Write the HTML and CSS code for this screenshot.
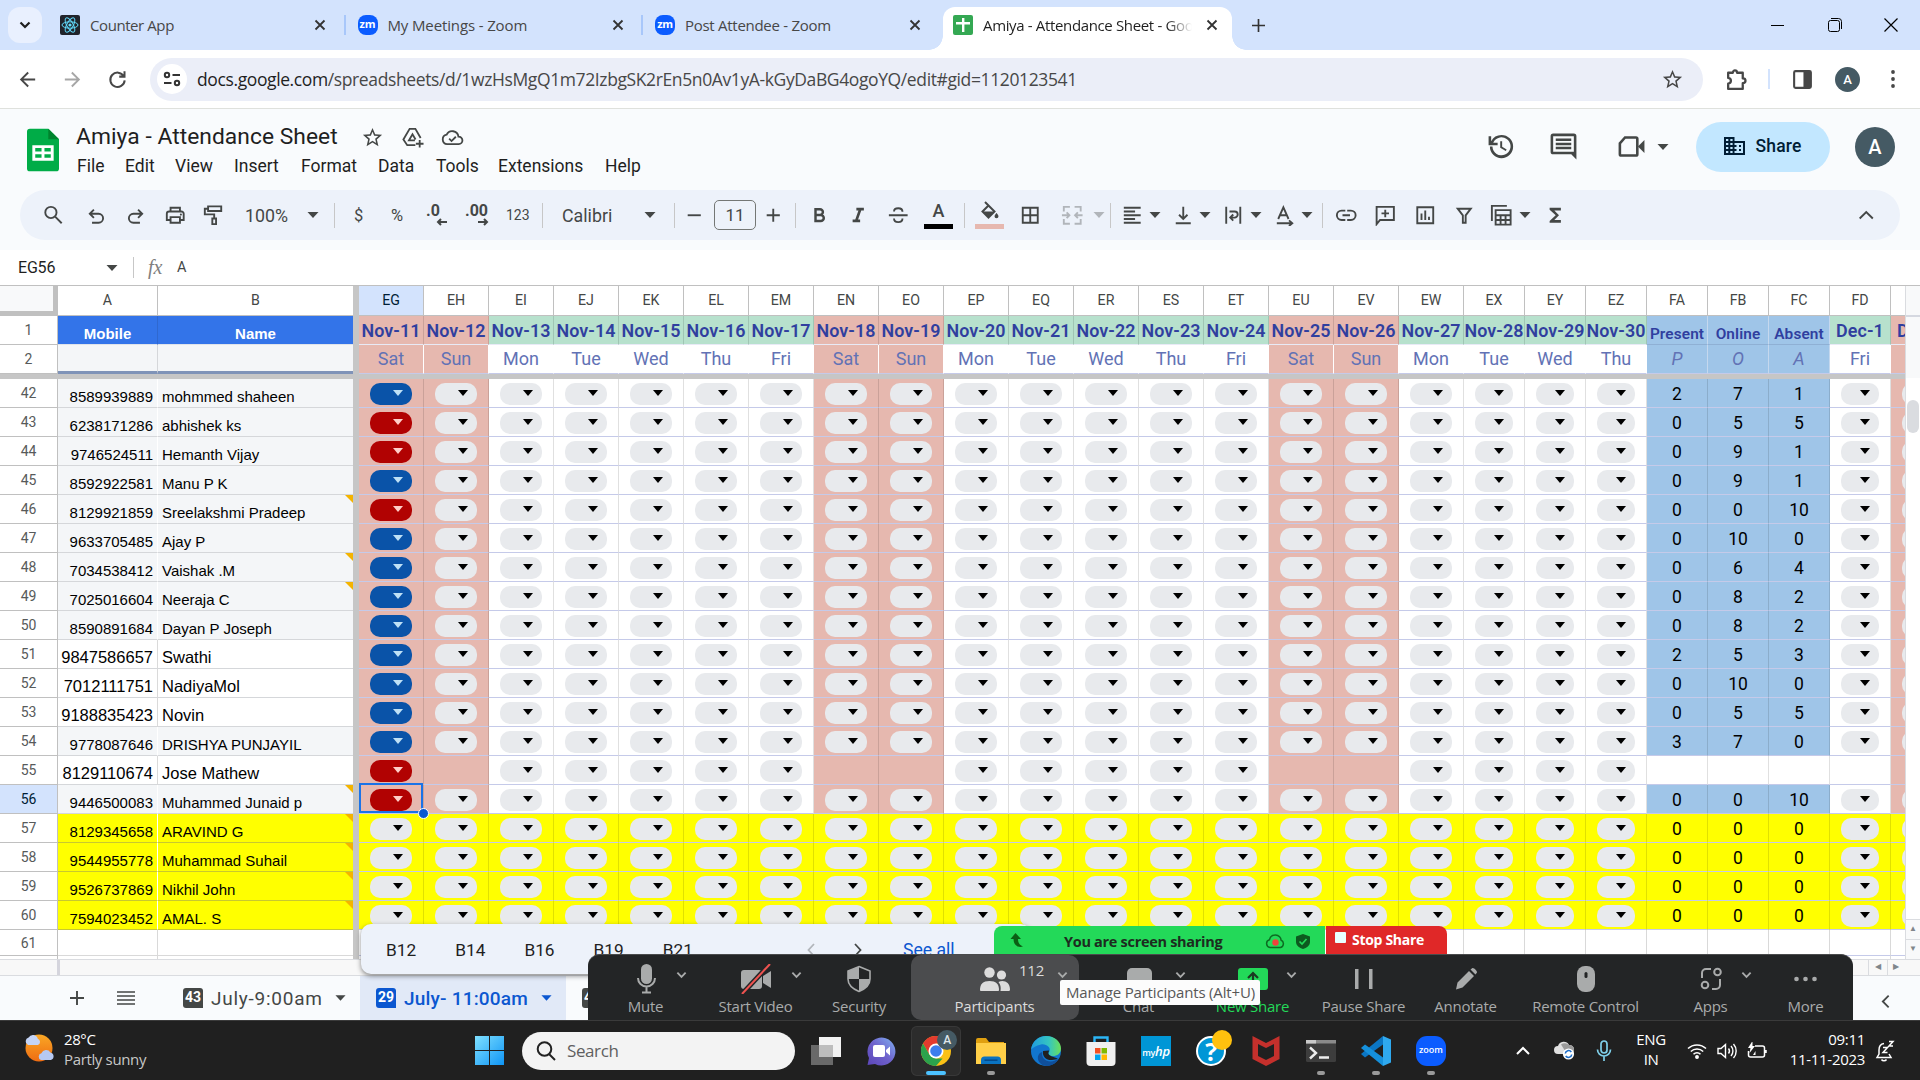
FILE: index.html
```html
<!DOCTYPE html>
<html lang="en">
<head>
<meta charset="utf-8">
<title>Amiya - Attendance Sheet - Google Sheets</title>
<link rel="stylesheet" href="styles.css">
</head>
<body>
<svg width="0" height="0" class="defs">
  <defs>
    <symbol id="x" viewBox="0 0 12 12"><path d="M1.5 1.5l9 9M10.5 1.5l-9 9" stroke="currentColor" stroke-width="1.8" fill="none"/></symbol>
    <symbol id="tri" viewBox="0 0 12 6"><path d="M.5 0h11L6 6z" fill="currentColor"/></symbol>
    <symbol id="star" viewBox="0 0 24 24"><path fill="currentColor" d="M22 9.24l-7.19-.62L12 2 9.19 8.63 2 9.24l5.46 4.73L5.82 21 12 17.27 18.18 21l-1.63-7.03L22 9.24zM12 15.4l-3.76 2.27 1-4.28-3.32-2.88 4.38-.38L12 6.1l1.71 4.04 4.38.38-3.32 2.88 1 4.28L12 15.4z"/></symbol>
    <symbol id="chev" viewBox="0 0 12 8"><path d="M1.5 1.5L6 6l4.500-4.500" stroke="#a9abab" stroke-width="2" fill="none"/></symbol>
  </defs>
</svg>
<div class="screen">

  <header class="tabs">
    <button class="tabsearch"><svg width="12" height="8" viewBox="0 0 12 8"><path d="M1.500 1.500L6 6l4.500-4.500" stroke="#1f1f1f" stroke-width="2.200" fill="none"/></svg></button>
    <div class="tab t1">
      <svg class="fav" viewBox="0 0 20 20"><rect width="20" height="20" rx="2" fill="#20232a"/><g fill="none" stroke="#61dafb" stroke-width="1"><ellipse cx="10" cy="10" rx="8" ry="3.200"/><ellipse cx="10" cy="10" rx="8" ry="3.200" transform="rotate(60 10 10)"/><ellipse cx="10" cy="10" rx="8" ry="3.200" transform="rotate(120 10 10)"/></g><circle cx="10" cy="10" r="1.600" fill="#61dafb"/></svg>
      <span class="ttl">Counter App</span><svg class="close"><use href="#x"/></svg>
    </div>
    <i class="tsep"></i>
    <div class="tab t2"><span class="fav zm">zm</span><span class="ttl">My Meetings - Zoom</span><svg class="close"><use href="#x"/></svg></div>
    <i class="tsep"></i>
    <div class="tab t3"><span class="fav zm">zm</span><span class="ttl">Post Attendee - Zoom</span><svg class="close"><use href="#x"/></svg></div>
    <div class="tab active">
      <svg class="fav" viewBox="0 0 20 20"><rect width="20" height="20" rx="2" fill="#34a853"/><path d="M9 3h2.400v4H17v2.400h-5.600V17H9V9.400H3V7h6z" fill="#fff"/></svg>
      <span class="ttl fade">Amiya - Attendance Sheet - Goo</span><svg class="close"><use href="#x"/></svg>
    </div>
    <svg class="newtab" viewBox="0 0 14 14"><path d="M7 0v14M0 7h14" stroke="#333" stroke-width="1.800"/></svg>
    <div class="wincontrols">
      <svg width="14" height="14"><path d="M0 7.500h13" stroke="#000"/></svg>
      <svg width="14" height="14" fill="none" stroke="#000"><rect x=".5" y="2.500" width="11" height="11" rx="2"/><path d="M3 .5h7.500a3 3 0 0 1 3 3V11"/></svg>
      <svg width="14" height="14"><path d="M.5.5l13 13M13.500.5l-13 13" stroke="#000" stroke-width="1.200"/></svg>
    </div>
  </header>

  <nav class="omni">
    <svg class="nv" viewBox="0 0 24 24"><path fill="#474747" d="M20 11H7.800l5.600-5.600L12 4l-8 8 8 8 1.400-1.400L7.800 13H20z"/></svg>
    <svg class="nv" viewBox="0 0 24 24"><path fill="#a6a6a6" d="M4 11h12.200l-5.600-5.600L12 4l8 8-8 8-1.400-1.400 5.600-5.600H4z"/></svg>
    <svg class="nv" viewBox="0 0 24 24"><path d="M18.500 8.500A7.500 7.500 0 1 0 19.500 13M19.300 3.500V9h-5.500" stroke="#474747" stroke-width="2.100" fill="none"/></svg>
    <div class="urlbar">
      <span class="site"><svg width="18" height="16" viewBox="0 0 18 16" fill="none" stroke="#333" stroke-width="2"><circle cx="4" cy="4" r="2.200"/><path d="M9.500 4H17M1 12h7.500"/><circle cx="14" cy="12" r="2.200"/></svg></span>
      <span class="url"><b>docs.google.com</b>/spreadsheets/d/1wzHsMgQ1m72IzbgSK2rEn5n0Av1yA-kGyDaBG4ogoYQ/edit#gid=1120123541</span>
      <svg class="ustar"><use href="#star"/></svg>
    </div>
    <svg class="ext" viewBox="0 0 24 24"><path d="M4 5.500h4.500c0-3 4-3 4 0H18v5.500c3.500 0 3.500 4.500 0 4.500V21H4v-5c3.500-.5 3.500-5 0-5.500z" stroke="#474747" stroke-width="2.200" fill="none" stroke-linejoin="round"/></svg>
    <i class="osep"></i>
    <svg class="panel" viewBox="0 0 20 20"><rect x="1.200" y="1.200" width="17.600" height="17.600" rx="1.500" fill="none" stroke="#474747" stroke-width="2.200"/><path d="M11 1h8v18h-8z" fill="#474747"/></svg>
    <span class="av small">A</span>
    <svg class="dots" viewBox="0 0 4 20" fill="#474747"><circle cx="2" cy="3" r="1.900"/><circle cx="2" cy="10" r="1.900"/><circle cx="2" cy="17" r="1.900"/></svg>
  </nav>

  <section class="dochead">
    <svg class="logo" viewBox="0 0 33 44"><path d="M3 0h19l11 11v30a3 3 0 0 1-3 3H3a3 3 0 0 1-3-3V3a3 3 0 0 1 3-3z" fill="#00ac47"/><path d="M22 0l11 11H22z" fill="#00832d"/><path d="M5.500 17h22v16h-22zm3 3v3.500h6.500V20zm9.500 0v3.500h6.500V20zm-9.500 6.500V30h6.500v-3.500zm9.500 0V30h6.500v-3.500z" fill="#fff" fill-rule="evenodd"/></svg>
    <div class="doc">
      <div class="titleline">
        <h1>Amiya - Attendance Sheet</h1>
        <svg class="hi"><use href="#star"/></svg>
        <svg class="hi" viewBox="0 0 24 24" fill="none" stroke="#444746" stroke-width="1.900"><path d="M15 20H6.500L2.500 14 9 3h6l5.500 9.500"/><path d="M14.500 15H8.300L12 8.600l3.200 5.500M19.500 14.500v8M15.500 18.500h8"/></svg>
        <svg class="hi" viewBox="0 0 24 24" fill="none" stroke="#444746" stroke-width="1.900"><path d="M6.500 19a5 5 0 0 1-.6-9.900A6.500 6.500 0 0 1 18.200 11a4 4 0 0 1 .3 8z"/><path d="M8.500 13.200l2.500 2.500 4.500-4.500"/></svg>
      </div>
      <div class="menu"><span>File</span><span>Edit</span><span>View</span><span>Insert</span><span>Format</span><span>Data</span><span>Tools</span><span>Extensions</span><span>Help</span></div>
    </div>
    <div class="docright">
      <svg class="big" viewBox="0 0 24 24"><path fill="#444746" d="M13 3a9 9 0 0 0-8 4.900V4H3v7h7V9H6.600A7 7 0 1 1 6 12H4a9 9 0 1 0 9-9zm-1 5v5l4.300 2.500.7-1.200-3.500-2.100V8z" transform="translate(-1)"/></svg>
      <svg class="big" viewBox="0 0 24 24"><path fill="#444746" fill-rule="evenodd" d="M4 2h16a2 2 0 0 1 2 2v18l-4-4H4a2 2 0 0 1-2-2V4a2 2 0 0 1 2-2zm0 2v12h16V4zm2 1.800h12v2H6zM6 9h12v2H6zm0 3.200h12v2H6z"/></svg>
      <svg class="big" viewBox="0 0 24 24"><path d="M3 9.500L7 5h8.500a1 1 0 0 1 1 1v12a1 1 0 0 1-1 1H4a1 1 0 0 1-1-1z" stroke="#444746" stroke-width="2" fill="none"/><path d="M17 12l5-5v10z" fill="#444746"/></svg>
      <svg class="tri"><use href="#tri"/></svg>
      <button class="share"><svg width="21" height="18" viewBox="0 0 21 18"><path fill="#001d35" fill-rule="evenodd" d="M0 0h10.500v4H21v14H0zM2 2v2h2.300V2zm4.300 0v2h2.300V2zM2 6v2h2.300V6zm4.300 0v2h2.300V6zM2 10v2h2.300v-2zm4.300 0v2h2.300v-2zM2 14v2h2.300v-2zm4.300 0v2h2.300v-2zm4.200-8v2h2v2h-2v2h2v2h-2v2H19V6zM15 8h2v2h-2zm0 4h2v2h-2z"/></svg>Share</button>
      <span class="av">A</span>
    </div>
  </section>

  <div class="toolwrap"><div class="toolbar">
    <i></i>
    <svg class="ic" viewBox="0 0 24 24"><g fill="none" stroke="#444746" stroke-width="2"><circle cx="9.500" cy="9" r="6"/><path d="M14 13.500L21 20.500"/></g></svg>
    <svg class="ic" viewBox="0 0 24 24"><path d="M7.500 20h7a4.800 4.800 0 0 0 0-9.600H5.500M9.500 6L5.100 10.400l4.400 4.400" fill="none" stroke="#444746" stroke-width="2"/></svg>
    <svg class="ic" viewBox="0 0 24 24"><path d="M17 20h-7a4.800 4.800 0 0 1 0-9.600h9M15 6l4.400 4.400L15 14.800" fill="none" stroke="#444746" stroke-width="2"/></svg>
    <svg class="ic" viewBox="0 0 24 24"><path fill="none" stroke="#444746" stroke-width="2" d="M7 8V4h10v4M7 17H3v-6.500A2.500 2.500 0 0 1 5.500 8h13a2.500 2.500 0 0 1 2.500 2.500V17h-4M7 14h10v6H7z"/><circle cx="18" cy="11.300" r="1.100" fill="#444746"/></svg>
    <svg class="ic" viewBox="0 0 24 24"><path fill="none" stroke="#444746" stroke-width="2" d="M6.500 2.500h14v5h-14zM6.500 5H3v6h10v4M11 15.500h4v6h-4z"/></svg>
    <span class="lbl">100%</span>
    <svg class="tri"><use href="#tri"/></svg>
    <i class="sep"></i>
    <span class="lbl s">$</span>
    <span class="lbl s">%</span>
    <span class="dec"><b>.0</b><svg width="12" height="8" viewBox="0 0 12 8"><path d="M11 4H2M5 1L2 4l3 3" stroke="#444746" stroke-width="2" fill="none"/></svg></span>
    <span class="dec"><b>.00</b><svg width="12" height="8" viewBox="0 0 12 8"><path d="M1 4h9M7 1l3 3-3 3" stroke="#444746" stroke-width="2" fill="none"/></svg></span>
    <span class="lbl num">123</span>
    <i class="sep"></i>
    <span class="lbl cal">Calibri</span>
    <svg class="tri"><use href="#tri"/></svg>
    <i class="sep"></i>
    <svg class="ic" viewBox="0 0 24 24"><path d="M5 12h14" stroke="#444746" stroke-width="2"/></svg>
    <span class="size">11</span>
    <svg class="ic" viewBox="0 0 24 24"><path d="M5 12h14M12 5v14" stroke="#444746" stroke-width="2"/></svg>
    <i class="sep"></i>
    <svg class="ic" viewBox="0 0 24 24"><path d="M8 5.500h4.800a3 3 0 0 1 0 6.200H8zM8 11.700h5.600a3.200 3.200 0 0 1 0 6.500H8z" stroke="#444746" stroke-width="2.600" fill="none"/></svg>
    <svg class="ic" viewBox="0 0 24 24"><path fill="#444746" d="M10 4v3h2.200l-3.400 9.500H6v3h8v-3h-2.200L15.200 7H18V4z"/></svg>
    <svg class="ic" viewBox="0 0 24 24"><path d="M2 12h20M16.500 8.200c0-2.500-2-3.700-4.500-3.700S7.500 5.700 7.500 8M7.500 15.500c0 2.500 2 3.800 4.500 3.800s4.500-1.300 4.500-3.800" stroke="#444746" stroke-width="2" fill="none"/></svg>
    <span class="acol"><b>A</b><i></i></span>
    <i class="sep"></i>
    <span class="acol pinkbar"><svg width="20" height="20" viewBox="0 0 20 20"><path d="M5 1l9.500 9.500-6 6-6-6 6-6" fill="none" stroke="#444746" stroke-width="2"/><path d="M3 10.500h11l-5.500 5.500zM16.500 12s2 2.200 2 3.300a2 2 0 0 1-4 0c0-1.100 2-3.300 2-3.300z" fill="#444746"/></svg><i></i></span>
    <svg class="ic" viewBox="0 0 24 24"><path d="M4 4h16v16H4zM12 4v16M4 12h16" stroke="#444746" stroke-width="2" fill="none"/></svg>
    <svg class="ic off" viewBox="0 0 24 24"><path d="M9.500 3H3v5M3 16v5h6.500M14.500 3H21v5M21 16v5h-6.500M1 12h7M6 9l3 3-3 3M23 12h-7M18 9l-3 3 3 3" stroke="#444746" stroke-width="2" fill="none"/></svg>
    <svg class="tri off"><use href="#tri"/></svg>
    <i class="sep"></i>
    <svg class="ic" viewBox="0 0 24 24"><path d="M3 4h18M3 8h12M3 12h18M3 16h12M3 20h18" stroke="#444746" stroke-width="1.900"/></svg>
    <svg class="tri"><use href="#tri"/></svg>
    <svg class="ic" viewBox="0 0 24 24"><path d="M4 20.500h16M12 3v13M7.500 11.500L12 16l4.500-4.500" stroke="#444746" stroke-width="2" fill="none"/></svg>
    <svg class="tri"><use href="#tri"/></svg>
    <svg class="ic" viewBox="0 0 24 24"><path d="M4.500 3v18M19.500 3v18M8 8h5.500a3.200 3.200 0 0 1 0 6.500H9M12 11.200L8.800 14.500l3.200 3.300" stroke="#444746" stroke-width="2" fill="none"/></svg>
    <svg class="tri"><use href="#tri"/></svg>
    <svg class="ic" viewBox="0 0 24 24"><path d="M4.500 16L10 3.500 15.500 16M6.500 12h7M3 20.500h16M16 17.500l3.500 3-3.500 3" stroke="#444746" stroke-width="2" fill="none"/></svg>
    <svg class="tri"><use href="#tri"/></svg>
    <i class="sep"></i>
    <svg class="ic" viewBox="0 0 24 24"><path d="M11 7H7a5 5 0 0 0 0 10h4M13 7h4a5 5 0 0 1 0 10h-4M8 12h8" stroke="#444746" stroke-width="2" fill="none"/></svg>
    <svg class="ic" viewBox="0 0 24 24"><path d="M2.800 21.500V3h18.400v14H6.500zM12 6v8M8 10h8" stroke="#444746" stroke-width="2" fill="none"/></svg>
    <svg class="ic" viewBox="0 0 24 24"><path d="M3.500 3.500h17v17h-17zM8 10v7M12 7v10M16 13.500V17" stroke="#444746" stroke-width="2" fill="none"/></svg>
    <svg class="ic" viewBox="0 0 24 24"><path d="M5 5h14l-5.500 7.200V20h-3v-7.800z" stroke="#444746" stroke-width="2" fill="none"/></svg>
    <svg class="ic" viewBox="0 0 24 24"><path d="M2 18V2h16M6 6.500h16V22H6zM6 12h16M6 17h16M11.300 12v10M16.600 12v10" stroke="#444746" stroke-width="2" fill="none"/></svg>
    <svg class="tri"><use href="#tri"/></svg>
    <svg class="ic" viewBox="0 0 24 24"><path d="M18 4v3h-7l5 5-5 5h7v3H6v-2l6.500-6L6 6V4z" fill="#444746"/></svg>
    <svg class="ic caret" viewBox="0 0 24 24"><path d="M5 15.500l7-7 7 7" stroke="#444746" stroke-width="2" fill="none"/></svg>
  </div></div>

  <div class="fbar">
    <span class="ref">EG56</span><svg class="tri"><use href="#tri"/></svg><i></i><em>fx</em><span class="fv">A</span>
  </div>

  <main class="sheet">
    <div class="gridarea" id="grid"></div>
    <aside class="vscroll"><div class="vhead"></div><div class="vhead2"></div><div class="thumb"></div><div class="vbtn up">▲</div><div class="vbtn">▼</div></aside>
  </main>
  <div class="hscroll"><i></i><span>◀</span><span>▶</span></div>

  <footer class="sheettabs">
    <svg class="add" viewBox="0 0 14 14"><path d="M7 0v14M0 7h14" stroke="#444746" stroke-width="1.900"/></svg>
    <svg class="all" viewBox="0 0 18 14"><path d="M0 1h18M0 5h18M0 9h18M0 13h18" stroke="#444746" stroke-width="1.700"/></svg>
    <div class="stab"><span class="badge">43</span><span class="sn">July-9:00am</span><svg class="tri"><use href="#tri"/></svg></div>
    <div class="stab on"><span class="badge">29</span><span class="sn">July- 11:00am</span><svg class="tri"><use href="#tri"/></svg></div>
    <div class="stab"><span class="badge">48</span></div>
    <svg class="side" viewBox="0 0 10 16"><path d="M8.500 1.500L2 8l6.500 6.500" stroke="#444746" stroke-width="2" fill="none"/></svg>
  </footer>

  <footer class="taskbar">
    <div class="weather">
      <svg width="32" height="32" viewBox="0 0 32 32"><defs><linearGradient id="sun" x1="0" y1="0" x2="0" y2="1"><stop offset="0" stop-color="#f9a825"/><stop offset="1" stop-color="#ef6c12"/></linearGradient></defs><circle cx="15" cy="15" r="13.500" fill="url(#sun)"/><path d="M4 12a4 4 0 0 1 .6-7.500 5 5 0 0 1 9.200 1.200A3.400 3.400 0 0 1 14 12z" fill="#c4d4f6"/><path d="M17 27a3.500 3.500 0 0 1 .4-6.700 5 5 0 0 1 9-.8A3.900 3.900 0 0 1 27 27z" fill="#b6c9f3"/></svg>
      <p>28°C<br><span>Partly sunny</span></p>
    </div>
    <svg class="win" viewBox="0 0 29 29"><defs><linearGradient id="w" x1="0" y1="0" x2="1" y2="1"><stop offset="0" stop-color="#7fe0ff"/><stop offset="1" stop-color="#0f95f5"/></linearGradient></defs><path d="M0 0h14v14H0zM15 0h14v14H15zM0 15h14v14H0zM15 15h14v14H15z" fill="url(#w)"/></svg>
    <div class="search"><svg width="20" height="20" viewBox="0 0 20 20" fill="none" stroke="#222" stroke-width="2"><circle cx="8.500" cy="8" r="6.800"/><path d="M13 13l6 6"/></svg>Search</div>
    <div class="apps">
      <span><svg viewBox="0 0 30 30"><path d="M8 1h22v20H8z" fill="#f2f2f2"/><path d="M0 9h22v20H0z" fill="#777" opacity=".85"/><path d="M8 9h14v12H8z" fill="#bdbdbd"/></svg></span>
      <span><svg viewBox="0 0 30 30"><defs><linearGradient id="ch" x1="0" y1="1" x2="1" y2="0"><stop offset="0" stop-color="#5b45b8"/><stop offset=".5" stop-color="#6f62cc"/><stop offset="1" stop-color="#7fb2f2"/></linearGradient></defs><path d="M1.500 29l1.500-7a14 14 0 1 1 6 6z" fill="url(#ch)"/><rect x="7" y="9" width="12" height="12" rx="2" fill="#fff"/><path d="M20 14l4-3.500v9L20 16z" fill="#fff"/></svg></span>
      <span class="cur"><svg viewBox="0 0 30 30"><circle cx="15" cy="15" r="15" fill="#fbc116"/><path d="M2 7.500A15 15 0 0 1 28 7.500H15L8.500 18.700z" fill="#e33b2e"/><path d="M2 7.500L8.500 18.700 15 22.500h6.500L15 30A15 15 0 0 1 2 7.500z" fill="#2ba24c"/><circle cx="15" cy="15" r="7.500" fill="#fff"/><circle cx="15" cy="15" r="5.800" fill="#3b7ded"/></svg><b class="mini">A</b><i class="run wide"></i></span>
      <span><svg viewBox="0 0 30 30"><path d="M0 4a2 2 0 0 1 2-2h8l3 4h15v8H0z" fill="#e0a010"/><path d="M0 7h30v21H0z" fill="#ffcf48"/><path d="M5 28v-4a3.500 3.500 0 0 1 3.500-3.500h13A3.500 3.500 0 0 1 25 24v4z" fill="#0a73c2"/><path d="M8.500 24.200h13" stroke="#04488a" stroke-width="1.500"/></svg><i class="run"></i></span>
      <span><svg viewBox="0 0 30 30"><defs><linearGradient id="eg" x1="0" y1="0" x2="1" y2="0"><stop offset="0" stop-color="#1f9be0"/><stop offset=".6" stop-color="#35c5c0"/><stop offset="1" stop-color="#6be05a"/></linearGradient></defs><circle cx="15" cy="15" r="15" fill="#1176cf"/><path d="M0 14C1 5 8 0 15 0c9 0 15 6 15 12.500 0 5-4 7.500-8 7.500-4 0-5-2-4-3.500 3-5-3-9-8-8S1 12 0 14z" fill="url(#eg)"/><path d="M11 16c-1 7 6 11.500 13 8.500 2-.8 3.500-1.500 3-.5A15 15 0 0 1 15 30C5 28 5 18 11 16z" fill="#0f4f9b"/><path d="M12 15c-1 6 4 9.500 9 9 3-.3 5.500-1.500 6-.8-1-2-8-2.200-9.500-5.200-.6-1.400.5-2 .5-3.500z" fill="#202020"/></svg></span>
      <span><svg viewBox="0 0 30 30"><path d="M8.500 6V1.500h13V6" stroke="#2bb5f5" stroke-width="2.400" fill="none"/><path d="M.5 6h29v20a4 4 0 0 1-4 4h-21a4 4 0 0 1-4-4z" fill="#f0f0f0"/><path d="M9 12h5.500v5.500H9z" fill="#f25022"/><path d="M15.500 12H21v5.500h-5.500z" fill="#7fba00"/><path d="M9 18.500h5.500V24H9z" fill="#00a4ef"/><path d="M15.500 18.500H21V24h-5.500z" fill="#ffb900"/></svg></span>
      <span class="hp"><b>my<em>hp</em></b></span>
      <span class="help"><b>?</b><i class="note"></i></span>
      <span><svg viewBox="0 0 30 30"><path d="M1.500 0L15 7 28.500 0v23L15 30 1.500 23z" fill="#c5302c"/><path d="M7 8l8 4 8-4v12l-8 4-8-4z" fill="#202020"/></svg></span>
      <span><svg viewBox="0 0 30 30"><rect y="4" width="30" height="22" rx="1.500" fill="#3d3d3d"/><path d="M0 4h30v3.500H0z" fill="#8a8a8a"/><path d="M0 4h10v3.500H0z" fill="#c9c9c9"/><path d="M4 11.500l6 5.500-6 5.500M13 21.500h10" stroke="#eee" stroke-width="2.400" fill="none"/></svg><i class="run"></i></span>
      <span><svg viewBox="0 0 30 30"><path d="M22 0l8 3.500v23L22 30z" fill="#2fa9ef"/><path d="M22 0v8.500L4 21.500 0 18z" fill="#0b76c4"/><path d="M22 30v-8.500L4 8.500 0 12z" fill="#1590dc"/></svg><i class="run"></i></span>
      <span class="zoomapp"><b>zoom</b><i class="run"></i></span>
    </div>
    <div class="tray">
      <svg width="14" height="10" viewBox="0 0 14 10"><path d="M1 8l6-6 6 6" stroke="#fff" stroke-width="2" fill="none"/></svg>
      <svg width="22" height="20" viewBox="0 0 22 20"><path d="M5 13a4 4 0 0 1 0-8 6 6 0 0 1 11-1 4 4 0 0 1 1 9z" fill="#e0e0e0"/><path d="M8 3.500a6 6 0 0 1 8 .5 4 4 0 0 1 1 9h-3z" fill="#9a9a9a"/><circle cx="15.500" cy="13" r="5.600" fill="#fff"/><path d="M12.300 12.500a3.300 3.300 0 0 1 6-1.500M18.700 13.500a3.300 3.300 0 0 1-6 1.500" stroke="#1c6dc9" stroke-width="1.600" fill="none"/></svg>
      <svg width="16" height="22" viewBox="0 0 16 22" fill="none" stroke="#7fd0ea" stroke-width="1.700"><rect x="5" y="1" width="6" height="12" rx="3"/><path d="M1.500 9.500a6.500 6.500 0 0 0 13 0M8 16v5"/></svg>
      <p class="lang">ENG<br>IN</p>
      <svg width="20" height="18" viewBox="0 0 20 18" fill="none" stroke="#fff" stroke-width="1.500"><path d="M1 6.500a13 13 0 0 1 18 0M3.800 9.500a9 9 0 0 1 12.400 0M6.500 12.300a5 5 0 0 1 7 0"/><circle cx="10" cy="15" r="1.200" fill="#fff"/></svg>
      <svg width="20" height="18" viewBox="0 0 20 18" fill="none" stroke="#fff" stroke-width="1.400"><path d="M1 6.500h3L8.500 2.500v13L4 11.500H1zM11.500 6.500a4 4 0 0 1 0 5M14 4a7.500 7.500 0 0 1 0 10M16.500 2a10.500 10.500 0 0 1 0 14"/></svg>
      <svg width="20" height="18" viewBox="0 0 20 18" fill="none" stroke="#fff" stroke-width="1.500"><path d="M8 4h7.500a2 2 0 0 1 2 2v7a2 2 0 0 1-2 2H3.500a2 2 0 0 1-2-2V9M19 8v3"/><path d="M5.500-1L1 6h2.500L2.500 11 8 4H5.500z" fill="#fff" stroke="none"/><path d="M6 13h2.500V9z" fill="#fff" stroke="none"/></svg>
      <p class="clock">09:11<br>11-11-2023</p>
      <svg width="20" height="22" viewBox="0 0 20 22" fill="none" stroke="#fff" stroke-width="1.500"><path d="M9 3.500C5 4 4 7 4 10v4l-2 3.500h14L14 14M6.500 19.500a3 3 0 0 0 5 0"/><path d="M8 7.500h4.500L8 12.500h4.500M14 1.500h4L14 6h4"/></svg>
    </div>
  </footer>

  <div class="explore"><span>B12</span><span>B14</span><span>B16</span><span>B19</span><span>B21</span>
    <svg class="pg off" viewBox="0 0 8 14"><path d="M7 1L1.500 7 7 13" stroke="#444746" stroke-width="1.800" fill="none"/></svg><svg class="pg" viewBox="0 0 8 14"><path d="M1 1l5.500 6L1 13" stroke="#444746" stroke-width="1.800" fill="none"/></svg><a>See all</a></div>

  <div class="sharebar">
    <div class="sharing"><svg width="16" height="16" viewBox="0 0 16 16"><path d="M6.500 0L12 6H9c0 3 1 6 5 7.500C9 15 4.500 12.500 4.500 6H1.500z" fill="#0b5f14"/></svg><b>You are screen sharing</b>
      <svg width="20" height="15" viewBox="0 0 20 15"><path d="M5 13.500a4 4 0 0 1-.5-7.800C5 3 7.500 1 10.500 1 14 1 16 4 16 6a4 4 0 0 1-.5 7.500z" fill="none" stroke="#0d6b22" stroke-width="1.500"/><circle cx="10.500" cy="8.500" r="3.200" fill="#f0413c"/></svg>
      <svg width="14" height="15" viewBox="0 0 14 15"><path d="M7 0l7 2.500V8c0 3.500-3.500 6-7 7-3.500-1-7-3.500-7-7V2.500z" fill="#0d5a1f"/><path d="M3.500 7.500L6 10l4.500-5" stroke="#23d959" stroke-width="1.700" fill="none"/></svg></div>
    <div class="stop"><i></i><b>Stop Share</b></div>
  </div>

  <div class="zoombar">
    <div class="zi z1"><svg viewBox="0 0 30 30"><rect x="10" y="0" width="11" height="20" rx="5.500" fill="#a9abab"/><path d="M7 14a8.500 8.500 0 0 0 17 0M15.500 23v5M11 28.500h9" stroke="#a9abab" stroke-width="2" fill="none"/></svg><svg class="zc"><use href="#chev"/></svg><span>Mute</span></div>
    <div class="zi z2"><svg viewBox="0 0 30 30"><rect x="0" y="6" width="21" height="19" rx="3" fill="#a9abab"/><path d="M22 12l8-5v17l-8-5z" fill="#a9abab"/><path d="M1 30L29 0" stroke="#232526" stroke-width="5"/><path d="M1 30L29 0" stroke="#ee5350" stroke-width="2"/></svg><svg class="zc"><use href="#chev"/></svg><span>Start Video</span></div>
    <div class="zi z3"><svg viewBox="0 0 30 30"><path d="M15 2.500L26 7v8c0 6-5 10-11 12.500C9 25 4 21 4 15V7z" fill="none" stroke="#a9abab" stroke-width="1.600"/><path d="M15 2.500V15H4V7zM15 15h11c0 6-5 10-11 12.500z" fill="#a9abab"/></svg><span>Security</span></div>
    <div class="zi z4"><svg viewBox="0 0 30 30"><g fill="#dcdcdc"><circle cx="9.500" cy="8.500" r="5.200"/><path d="M0 26c0-6 3-9 9.500-9s9.500 3 9.500 9c0 1-1 1-1 1H1s-1 0-1-1z"/><circle cx="21.500" cy="11" r="4.600"/><path d="M20.500 27c.6-4 0-6.500-2-9 5-2.500 11.500 0 11.500 7.500 0 1.500-1 1.500-1 1.500z"/></g></svg><em>112</em><svg class="zc"><use href="#chev"/></svg><span>Participants</span></div>
    <div class="zi z5"><svg viewBox="0 0 30 30"><rect x="3" y="4" width="25" height="21" rx="5" fill="#a9abab"/></svg><svg class="zc"><use href="#chev"/></svg><span>Chat</span></div>
    <div class="zi z6"><svg viewBox="0 0 30 30"><rect y="4" width="30" height="22" rx="3" fill="#23d959"/><path d="M15 22V10M10 14l5-5 5 5" stroke="#1b3a22" stroke-width="2.200" fill="none"/></svg><svg class="zc"><use href="#chev"/></svg><span>New Share</span></div>
    <div class="zi z7"><svg viewBox="0 0 30 30"><path d="M6 5h3.500v20H6zM20 5h3.500v20H20z" fill="#a9abab"/></svg><span>Pause Share</span></div>
    <div class="zi z8"><svg viewBox="0 0 30 30"><path d="M5 25.500l1.500-7L18 7l5 5-11.500 11.500zM19.500 5.500l2-1.500c1-.8 5 3 4.500 4.500L24.500 10.500z" fill="#a9abab"/></svg><span>Annotate</span></div>
    <div class="zi z9"><svg viewBox="0 0 30 30"><rect x="6" y="2" width="18" height="26" rx="8" fill="#a9abab"/><rect x="13.500" y="8" width="3" height="6" rx="1.500" fill="#232526"/></svg><span>Remote Control</span></div>
    <div class="zi z10"><svg viewBox="0 0 30 30" fill="none" stroke="#a9abab" stroke-width="2"><path d="M6 14V9a4 4 0 0 1 4-4h5M24 15v6a4 4 0 0 1-4 4h-4"/><circle cx="21.500" cy="8" r="3.300"/><circle cx="9" cy="21" r="3.300"/></svg><svg class="zc"><use href="#chev"/></svg><span>Apps</span></div>
    <div class="zi z11"><svg viewBox="0 0 30 30" fill="#a9abab"><circle cx="5" cy="15" r="2.600"/><circle cx="15" cy="15" r="2.600"/><circle cx="25" cy="15" r="2.600"/></svg><span>More</span></div>
  </div>
  <div class="tooltip">Manage Participants (Alt+U)</div>
</div>
<script src="script.js"></script>
</body>
</html>
```
FILE: styles.css
```css
* { box-sizing: border-box; }
body { margin: 0; font-family: Roboto, "Liberation Sans", sans-serif; color: #1f1f1f; overflow: hidden; }
button { border: 0; padding: 0; font: inherit; }
p, h1 { margin: 0; font-weight: 400; }
.defs { position: absolute; }
svg { flex: none; display: block; }
.screen { position: relative; width: 1920px; height: 1080px; overflow: hidden; display: flex; flex-direction: column; background: #fff; }
.screen > * { flex: none; }
.tri { width: 12px; height: 6px; color: #444746; }
.off { opacity: .35; }

/* browser tab strip */
.tabs { height: 50px; background: #d3e3fd; display: flex; align-items: center; font: 15px "Open Sans", sans-serif; color: #474747; padding-left: 8px; letter-spacing: -.35px; }
.tabsearch { width: 34px; height: 36px; margin-top: -1px; border-radius: 12px; background: #e9f0fe; display: grid; place-items: center; }
.tab { display: flex; align-items: center; height: 36px; }
.fav { width: 20px; height: 20px; margin-right: 10px; flex: none; }
.zm { background: #0b5cff; border-radius: 8px; color: #fff; font: bold 11px/18px "Open Sans", sans-serif; text-align: center; }
.ttl { white-space: nowrap; flex: 1; overflow: hidden; }
.close { width: 12px; height: 12px; color: #333; }
.t1 { width: 284px; padding-left: 18px; letter-spacing: -.42px; }
.tsep { width: 2px; height: 20px; background: #a8c7fa; margin-left: 17.500px; }
.t2 { width: 278px; padding-left: 12px; letter-spacing: -.13px; }
.t3 { width: 278px; padding-left: 12px; letter-spacing: -.28px; }
.active { position: relative; align-self: flex-end; background: #fff; height: 43px; padding: 0 14px 7px 10px; width: 289px; margin-left: 22px; border-radius: 12px 12px 0 0; color: #1f1f1f; }
.active::before, .active::after { content: ""; position: absolute; bottom: 0; width: 14px; height: 14px; }
.active::before { left: -14px; background: radial-gradient(circle at 0 0, transparent 13.500px, #fff 14px); }
.active::after { right: -14px; background: radial-gradient(circle at 100% 0, transparent 13.500px, #fff 14px); }
.fade { margin-right: 14px; -webkit-mask: linear-gradient(90deg, #000 88%, transparent); mask: linear-gradient(90deg, #000 88%, transparent); }
.newtab { width: 13px; height: 13px; margin-left: 19.500px; }
.wincontrols { margin-left: auto; display: flex; gap: 42.500px; padding-right: 22px; }

/* address bar */
.omni { height: 59px; display: flex; align-items: center; padding-left: 16px; border-bottom: 1px solid #dfe1dd; border-radius: 12px 12px 0 0; background: #fff; }
.nv { width: 23px; height: 23px; margin-right: 22px; }
.urlbar { height: 43px; width: 1553px; background: #ebeef8; border-radius: 22px; display: flex; align-items: center; padding-left: 7px; margin-left: -1px; }
.site { width: 30px; height: 30px; border-radius: 50%; background: #fff; display: grid; place-items: center; margin-right: 10px; }
.url { flex: 1; font: 17.500px "Open Sans", sans-serif; color: #474747; letter-spacing: -.385px; white-space: nowrap; }
.url b { font-weight: 400; color: #1f1f1f; }
.ustar { width: 23px; height: 23px; margin-right: 19px; color: #474747; }
.ext { width: 25px; height: 25px; margin-left: 21px; }
.osep { width: 2px; height: 20px; background: #d3e3fd; margin-left: 19px; }
.panel { width: 19px; height: 19px; margin-left: 23px; }
.av { display: grid; place-items: center; width: 40px; height: 40px; border-radius: 50%; background: #455a64; color: #fff; font: 500 20px Roboto, sans-serif; }
.av.small { width: 25px; height: 25px; font-size: 13px; margin-left: 23px; }
.dots { width: 4px; height: 20px; margin-left: 31px; }

/* document header */
.dochead { height: 81px; background: #f9fbfd; display: flex; padding-left: 27px; }
.logo { width: 32px; height: 44px; margin-top: 19px; }
.doc { padding: 12px 0 0 17px; width: 700px; }
.titleline { display: flex; align-items: center; height: 31px; color: #444746; }
h1 { font-size: 22.800px; color: #1f1f1f; width: 285px; white-space: nowrap; letter-spacing: .05px; }
.hi { width: 23px; height: 23px; margin-right: 17px; margin-top: 2px; }
.menu { display: grid; grid-template-columns: 48px 50px 59px 67px 77px 58px 62px 107px 60px; font-size: 17.500px; line-height: 28px; padding-left: 1px; color: #1f1f1f; }
.docright { flex: 1; display: flex; align-items: center; justify-content: flex-end; height: 75px; padding-right: 25px; }
.big { width: 31px; height: 31px; }
.docright .big + .big { margin-left: 31px; }
.docright .big:nth-child(3) { margin-left: 37px; }
.docright .tri { margin-left: 10px; }
.share { width: 134px; height: 50px; border-radius: 25px; background: #c2e7ff; color: #001d35; font: 500 17.500px Roboto, sans-serif; letter-spacing: .2px; display: flex; align-items: center; justify-content: center; gap: 10px; margin: 0 25px 0 27px; padding-bottom: 2px; }

/* toolbar */
.toolwrap { height: 60px; background: #f9fbfd; padding-left: 20px; }
.toolbar { width: 1880px; height: 50px; border-radius: 25px; background: #edf2fa; display: grid; align-items: center; color: #444746;
  grid-template-columns: 22px 43px 39px 40px 38px 43px 62px 27px 20px 37px 35px 39px 41px 36px 20px 82px 30px 9px 31px 48px 33px 13px 39px 40px 37px 40px 11px 44px 42px 32px 17px 11px 28px 23px 27px 23px 28px 24px 27px 21px 13px 39px 40px 39px 37px 29px 25px 311px 45px; }
.ic { width: 22.500px; height: 22.500px; }
.lbl { font-size: 17.800px; }
.lbl.s { font-size: 16.500px; }
.lbl.num { font-size: 14px; }
.sep { width: 1px; height: 25px; background: #c7c7c7; }
.dec { display: flex; flex-direction: column; font-size: 16px; line-height: 14px; }
.dec b { font-weight: 700; }
.dec svg { align-self: flex-end; margin-right: 17px; }
.size { width: 42px; height: 30px; border: 1px solid #747775; border-radius: 5px; font-size: 17px; line-height: 28px; text-align: center; }
.acol { width: 29px; height: 28px; display: flex; flex-direction: column; align-items: center; justify-content: space-between; }
.acol b { font: 500 18px/20px Roboto, sans-serif; }
.acol i { width: 29px; height: 5px; background: #000; }
.pinkbar i { background: #e6b8af; }

/* formula bar */
.fbar { height: 35px; display: flex; align-items: center; padding-left: 18px; }
.ref { width: 88px; letter-spacing: -.2px; font-size: 16px; }
.fbar i { width: 1px; height: 21px; background: #c7c7c7; margin: 0 14px 0 15px; }
.fbar em { font: italic 20px "Liberation Serif", serif; color: #808080; width: 29px; }
.fv { font-size: 14.500px; color: #444746; }

/* grid */
.sheet { height: 674px; border-top: 1px solid #c0c0c0; display: flex; background: #fff; }
.gridarea { width: 1905px; overflow: hidden; height: 673px; }
.row { display: flex; height: 29px; width: 2000px; }
.c { flex: none; border-right: 1px solid rgba(0,0,0,.12); border-bottom: 1px solid #c5cae9; display: flex; align-items: center; justify-content: center; font-size: 18px; white-space: nowrap; position: relative; width: 65px; }
.c.n { width: 61px; }
.rh { flex: none; width: 58px; border-right: 1px solid #c0c0c0; border-bottom: 1px solid #c0c0c0; font-size: 14px; color: #575a5a; display: flex; align-items: center; justify-content: center; background: #fff; }
.rh.sel, .hd .c.sel { background: #d3e3fd; color: #001d35; }
.a, .b { flex: none; border-right: 1px solid #fff; border-bottom: 1px solid #d5d7da; background: #f4f6f8; font: 15px "Liberation Sans", Arial, sans-serif; color: #000; display: flex; align-items: flex-end; white-space: nowrap; line-height: 17px; padding-bottom: 2px; position: relative; }
.a { width: 100px; justify-content: flex-end; padding-right: 4px; }
.b { width: 195px; padding-left: 4px; border-right: 0; }
.gut { flex: none; width: 6px; background: #c6c6c6; }
.white .a, .white .b { background: #fff; font-size: 16.500px; border-right-color: #dadada; }
.white .b { border-right: 0; }
.note-mark { position: absolute; right: 0; top: 0; border-top: 8px solid #f4b400; border-left: 8px solid transparent; }
.hd { height: 30px; }
.hd .c { border-color: #c0c0c0; color: #444746; font-size: 14.200px; background: #fff; padding-bottom: 1px; }
.hd .a, .hd .b { font: 14.200px Roboto, sans-serif; background: #fff; align-items: center; justify-content: center; padding: 0 0 1px; border-bottom-color: #c0c0c0; border-right: 1px solid #c0c0c0; color: #444746; }
.hd .b { border-right: 0; }
.hd .rh { background: #f8f9fa; border-right: 5px solid #c0c0c0; border-bottom: 5px solid #c0c0c0; }
.r1 .c { background: #b7e1cd; color: #303f9f; font-weight: 600; font-size: 17.900px; letter-spacing: .1px; border-bottom-color: #e8eaf6; }
.r1 .a, .r1 .b { background: #3374e9; color: #fff; font-weight: 700; justify-content: center; border-color: #2f68d0; padding: 0 0 2px; border-bottom-color: #dfe3ea; }
.r1 .c.sum { background: #9fc5e8; font-size: 15.400px; padding-top: 7px; border-right-color: #c5d8ee; border-bottom-color: #8fb0d4; }
.r2 .c { color: #6272b5; font-size: 18px; border-right-color: transparent; padding-bottom: 2px; }
.r2 .c.pink { border-right-color: #fff; }
.r2 .c.sum { font-style: italic; border-right-color: #c5d8ee; }
.r2 .a, .r2 .b { border-right-color: #d5d7da; border-bottom: 3px solid #7f93b8; }
.freeze { height: 5px; background: #c6c6c6; }
.c.pink, .r1 .c.pink { background: #e6b8af; }
.c.sum { background: #9fc5e8; }
.sumtxt { color: #000; font-size: 17.500px; padding-top: 1px; }
.yel .a, .yel .b, .yel .c { background: #ff0; }
.yel .a, .yel .b { border-bottom-color: #c8c830; }
.chip { width: calc(100% - 22px); height: 22.500px; border-radius: 10px; background: #e8eaed; display: flex; align-items: center; justify-content: flex-end; padding-right: 8.500px; color: #000; margin: 1.500px 0 0 -1px; }
.chip i { border: 5.700px solid transparent; border-top: 6.500px solid currentColor; border-bottom: 0; margin-top: -1px; }
.chip.bl { background: #0a53a8; color: #bfe1f6; }
.chip.rd { background: #b10202; color: #ffcfc9; }
.picked::after { content: ""; position: absolute; inset: -2px 0 0 0; border: 2px solid #1a73e8; }
.picked::before { content: ""; position: absolute; right: -6px; bottom: -6px; width: 9px; height: 9px; border-radius: 50%; background: #0b57d0; border: 1px solid #fff; box-sizing: content-box; z-index: 3; }
.row61 { height: 26px; }
.row61 .a, .row61 .b { background: #fff; border-color: #d9d9d9; }
.row61 .c { border-color: #d9d9d9; border-bottom-color: #c5cae9; }
.vscroll { width: 15px; display: flex; flex-direction: column; border-left: 1px solid #dadce0; }
.vhead { height: 31px; background: #f8f9fa; border-bottom: 2px solid #d5d8e0; }
.vhead2 { height: 62px; background: #f8f9fa; }
.thumb { width: 12px; height: 33px; border-radius: 6px; background: #dadce0; margin: 22px 0 486px 1px; }
.vbtn { height: 20px; border-top: 1px solid #dadce0; font-size: 8px; color: #80868b; text-align: center; line-height: 18px; background: #f8f9fa; flex: none; }
.hscroll { height: 17px; background: #f8f8f8; border-top: 1px solid #dadce0; border-bottom: 1px solid #dadce0; display: flex; justify-content: flex-end; padding-right: 15px; color: #80868b; font-size: 8px; line-height: 14px; }
.hscroll i { width: 3px; background: #d5d5dd; margin: 0 auto 0 57px; }
.hscroll span { width: 18.500px; border-left: 1px solid #dadce0; text-align: center; }

/* sheet tabs */
.sheettabs { height: 44px; background: #f9fbfd; display: flex; align-items: center; padding-left: 70px; color: #444746; }
.add { width: 14px; height: 14px; }
.all { width: 18px; height: 14px; margin: 0 42px 0 33px; }
.stab { height: 44px; display: flex; align-items: center; font-size: 19px; padding-left: 6px; width: 177px; }
.stab.on { width: 206px; padding-left: 16px; background: #e1e9f7; color: #0b57d0; font-weight: 500; margin-left: 6px; }
.stab.on + .stab { padding-left: 16px; }
.badge { width: 20px; height: 20px; background: currentColor; border-radius: 3px 3px 0 3px; font: bold 14px/19px Roboto, sans-serif; text-align: center; margin-right: 8px; -webkit-text-fill-color: #fff; }
.sn { letter-spacing: .75px; width: 124px; white-space: nowrap; }
.on .sn { width: 137px; letter-spacing: .2px; }
.stab .tri { color: currentColor; width: 11px; }
.side { width: 9px; height: 15px; margin-left: auto; margin-right: 30px; margin-top: 6px; }

/* taskbar */
.taskbar { height: 60px; background: #202020; display: flex; align-items: center; color: #fff; font: 15px/20px "Open Sans", sans-serif; border-top: 1px solid #3a3a3a; letter-spacing: -.4px; }
.weather { display: flex; gap: 8px; width: 475px; padding: 0 0 3px 24px; align-items: center; }
.weather span { color: #c8c8c8; letter-spacing: -.35px; }
.win { width: 29px; height: 29px; }
.search { margin-left: 18px; width: 273px; height: 38px; border-radius: 19px; background: #f3f3f3; color: #5f5f5f; font-size: 17px; display: flex; align-items: center; gap: 11px; padding-left: 14px; }
.apps { display: flex; gap: 5px; margin-left: 6px; }
.apps > span { width: 50px; height: 50px; display: grid; place-items: center; position: relative; }
.apps svg { width: 30px; height: 30px; }
.cur { background: #2c2c2c; border-radius: 6px; box-shadow: inset 0 0 0 1px #383838; }
.run { position: absolute; left: 21px; bottom: 1px; width: 8px; height: 4px; border-radius: 2px; background: #9a9a9a; }
.run.wide { left: 15px; width: 20px; background: #4cc2ff; }
.mini { position: absolute; right: 4px; top: 4px; width: 20px; height: 20px; border-radius: 50%; background: #455a64; font: 500 12px/20px Roboto, sans-serif; text-align: center; color: #dfe6ea; }
.hp b { width: 30px; height: 30px; background: #0096d6; font: 600 9px/30px "Open Sans", sans-serif; text-align: center; letter-spacing: -.3px; }
.hp em { font-size: 13px; }
.help b { width: 30px; height: 30px; border-radius: 50%; background: #0096d6; border: 2px solid #fff; font: bold 25px/27px "Open Sans", sans-serif; text-align: center; }
.note { position: absolute; right: 4px; top: 4px; width: 20px; height: 20px; border-radius: 50%; background: #ffc10e; }
.zoomapp b { width: 30px; height: 30px; border-radius: 11px; background: #0b5cff; font: 600 9px/28px "Open Sans", sans-serif; text-align: center; letter-spacing: 0; }
.tray { display: flex; align-items: center; margin-left: auto; padding-right: 25px; }
.tray p { padding-bottom: 3px; }
.tray > svg:nth-child(2) { margin-left: 23px; }
.tray > svg:nth-child(3) { margin: 0 23px 0 21px; }
.lang { text-align: center; width: 32px; margin-right: 20px; }
.tray > svg:nth-child(n+5) { margin-right: 10px; }
.clock { text-align: right; width: 88px; margin-right: 10px; letter-spacing: -.3px; }
.tray > svg:last-child { margin-right: 0; }

/* floating explore card */
.explore { position: absolute; left: 361px; top: 924px; width: 670px; height: 50px; border-radius: 10px; background: #edf2fa; box-shadow: 0 2px 5px rgba(0,0,0,.45); display: flex; align-items: center; padding: 2px 0 0 25px; font-size: 17.300px; }
.explore span { width: 69.200px; }
.pg { width: 8px; height: 14px; margin: 0 39px 0 75px; }
.pg + .pg { margin: 0 41px 0 0; }
.explore a { color: #0b57d0; font-size: 17.600px; }

/* screen sharing controls */
.sharebar { position: absolute; left: 994px; top: 926px; height: 30px; display: flex; gap: 1px; font: 14.500px "Open Sans", sans-serif; letter-spacing: -.45px; }
.sharing { width: 331px; background: #23d959; border-radius: 8px 0 0 0; display: flex; align-items: center; padding-left: 15px; color: #1d2b1f; }
.sharing b { width: 201px; margin-left: 39px; letter-spacing: -.3px; white-space: nowrap; }
.sharing svg + svg { margin-left: 11px; }
.stop { width: 121px; background: #e02828; border-radius: 0 8px 0 0; color: #fff; display: flex; align-items: center; padding: 0 0 3px 9px; font-size: 14px; letter-spacing: -.3px; }
.stop i { width: 11px; height: 11px; background: #e8ffff; margin: -5px 6px 0 0; border-radius: 1px; }
.zoombar { position: absolute; left: 588px; top: 954px; width: 1265px; height: 66px; background: #232526; border-radius: 12px 12px 0 0; border-top: 1px solid #4a4b4c; display: grid; grid-template-columns: 116px 104px 103px 168px 120px 108px 114px 90px 150px 100px 90px; font: 15px "Open Sans", sans-serif; letter-spacing: -.25px; color: #a9abab; }
.zi { position: relative; display: flex; flex-direction: column; align-items: center; justify-content: space-between; padding: 9px 1px 4px 0; white-space: nowrap; }
.zi > svg:first-child { width: 30px; height: 30px; }
.zc { position: absolute; width: 11px; height: 8px; top: 16px; right: 17px; }
.z4 { background: #4b4c4e; border-radius: 10px; color: #dcdcdc; }
.z4 .zc { right: 11px; }
.z4 em { position: absolute; left: 108px; top: 5px; font-style: normal; }
.z2 .zc { right: 6px; }
.z5 .zc { right: 13px; }
.z6 .zc { right: 10px; }
.z10 .zc { right: 9px; }
.z11 > svg:first-child { width: 27px; }
.z6 { color: #23d959; }
.tooltip { position: absolute; left: 1060px; top: 980px; width: 200px; height: 25px; background: #fcfcfc; border-radius: 2px; color: #575757; font: 15px/24px "Open Sans", sans-serif; padding-left: 6px; white-space: nowrap; letter-spacing: -.17px; }
```
FILE: script.js
```js
const cols = [
  ["EG", "Nov-11", "Sat"], ["EH", "Nov-12", "Sun"], ["EI", "Nov-13", "Mon"], ["EJ", "Nov-14", "Tue"],
  ["EK", "Nov-15", "Wed"], ["EL", "Nov-16", "Thu"], ["EM", "Nov-17", "Fri"], ["EN", "Nov-18", "Sat"],
  ["EO", "Nov-19", "Sun"], ["EP", "Nov-20", "Mon"], ["EQ", "Nov-21", "Tue"], ["ER", "Nov-22", "Wed"],
  ["ES", "Nov-23", "Thu"], ["ET", "Nov-24", "Fri"], ["EU", "Nov-25", "Sat"], ["EV", "Nov-26", "Sun"],
  ["EW", "Nov-27", "Mon"], ["EX", "Nov-28", "Tue"], ["EY", "Nov-29", "Wed"], ["EZ", "Nov-30", "Thu"],
  ["FA", "Present", "P"], ["FB", "Online", "O"], ["FC", "Absent", "A"], ["FD", "Dec-1", "Fri"], ["", "Dec-2", ""]
];
// number, mobile, name, status colour, totals, flags (w = white row, n = note, y = yellow row)
const people = [
  [42, "8589939889", "mohmmed shaheen", "bl", [2, 7, 1], ""],
  [43, "6238171286", "abhishek ks", "rd", [0, 5, 5], ""],
  [44, "9746524511", "Hemanth Vijay", "rd", [0, 9, 1], ""],
  [45, "8592922581", "Manu P K", "bl", [0, 9, 1], ""],
  [46, "8129921859", "Sreelakshmi Pradeep", "rd", [0, 0, 10], "n"],
  [47, "9633705485", "Ajay P", "bl", [0, 10, 0], ""],
  [48, "7034538412", "Vaishak .M", "bl", [0, 6, 4], "n"],
  [49, "7025016604", "Neeraja C", "bl", [0, 8, 2], "n"],
  [50, "8590891684", "Dayan P Joseph", "bl", [0, 8, 2], ""],
  [51, "9847586657", "Swathi", "bl", [2, 5, 3], "w"],
  [52, "7012111751", "NadiyaMol", "bl", [0, 10, 0], "w"],
  [53, "9188835423", "Novin", "bl", [0, 5, 5], "w"],
  [54, "9778087646", "DRISHYA PUNJAYIL", "bl", [3, 7, 0], ""],
  [55, "8129110674", "Jose Mathew", "rd", null, "w"],
  [56, "9446500083", "Muhammed Junaid p", "rd", [0, 0, 10], "n"],
  [57, "8129345658", "ARAVIND G", "", [0, 0, 0], "ny"],
  [58, "9544955778", "Muhammad Suhail", "", [0, 0, 0], "ny"],
  [59, "9526737869", "Nikhil John", "", [0, 0, 0], "ny"],
  [60, "7594023452", "AMAL. S", "", [0, 0, 0], "ny"]
];
const pink = new Set([0, 1, 7, 8, 14, 15, 24]);
const isSum = i => i >= 20 && i <= 22;
const colClass = i => "c" + (i >= 17 ? " n" : "");
const row = (cls, head, a, b, cell, sel) =>
  `<div class="row ${cls}"><div class="rh${sel ? " sel" : ""}">${head}</div><div class="a">${a}</div><div class="b">${b}</div><div class="gut"></div>` +
  cols.map((c, i) => cell(c, i)).join("") + "</div>";
const tint = i => (pink.has(i) ? " pink" : isSum(i) ? " sum" : "");

let html = row("hd", "", "A", "B", (c, i) => `<div class="${colClass(i)}${i === 0 ? " sel" : ""}">${c[0]}</div>`);
html += row("r1", "1", "Mobile", "Name", (c, i) => `<div class="${colClass(i)}${tint(i)}">${c[1]}</div>`);
html += row("r2", "2", "", "", (c, i) => `<div class="${colClass(i)}${tint(i)}">${c[2]}</div>`);
html += '<div class="freeze"></div>';
for (const [n, mobile, name, status, sums, flags] of people) {
  const cls = (flags.includes("w") ? "white " : "") + (flags.includes("y") ? "yel" : "");
  const mark = flags.includes("n") ? '<i class="note-mark"></i>' : "";
  html += row(cls, n, mobile, name + mark, (c, i) => {
    if (isSum(i)) return sums
      ? `<div class="${colClass(i)} sum sumtxt">${sums[i - 20]}</div>`
      : `<div class="${colClass(i)}"></div>`;
    const empty = n === 55 && ((pink.has(i) && i > 0) || i > 22);
    const picked = n === 56 && i === 0 ? " picked" : "";
    const chip = empty ? "" : `<span class="chip ${i === 0 ? status : ""}"><i></i></span>`;
    return `<div class="${colClass(i)}${tint(i)}${picked}">${chip}</div>`;
  }, n === 56);
}
html += row("row61", "61", "", "", (c, i) => `<div class="${colClass(i)}"></div>`);
html += row("row61", "", "", "", (c, i) => `<div class="${colClass(i)}"></div>`);
document.getElementById("grid").innerHTML = html;
```
